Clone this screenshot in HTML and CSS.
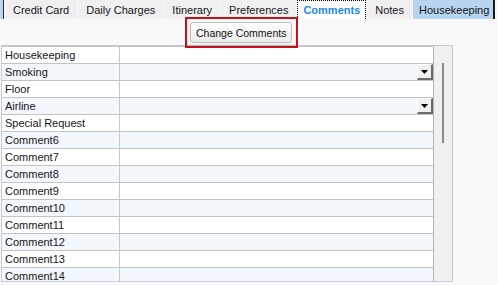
FILE: index.html
```html
<!DOCTYPE html>
<html lang="en">
<head>
  <meta charset="UTF-8" />
  <title>Reservation - Comments</title>
  <link rel="stylesheet" href="styles.css">
</head>
<body>
  <div class="tabs">
    <div class="tab stub"></div>
    <div class="tab">Credit Card</div>
    <div class="tab">Daily Charges</div>
    <div class="tab">Itinerary</div>
    <div class="tab">Preferences</div>
    <div class="tab active">Comments</div>
    <div class="tab">Notes</div>
    <div class="tab hk">Housekeeping</div>
  </div>

  <div class="toolbar">
    <button class="btn">Change Comments</button>
  </div>
  <div class="callout"></div>

  <div class="grid">
    <div class="rows">
      <div class="row"><div class="label">Housekeeping</div><div class="value"></div></div>
      <div class="row"><div class="label">Smoking</div><div class="value"><span class="drop"><svg width="7" height="4" viewBox="0 0 7 4"><polygon points="0,0 7,0 3.5,4" fill="#000"/></svg></span></div></div>
      <div class="row"><div class="label">Floor</div><div class="value"></div></div>
      <div class="row"><div class="label">Airline</div><div class="value"><span class="drop"><svg width="7" height="4" viewBox="0 0 7 4"><polygon points="0,0 7,0 3.5,4" fill="#000"/></svg></span></div></div>
      <div class="row"><div class="label">Special Request</div><div class="value"></div></div>
      <div class="row"><div class="label">Comment6</div><div class="value"></div></div>
      <div class="row"><div class="label">Comment7</div><div class="value"></div></div>
      <div class="row"><div class="label">Comment8</div><div class="value"></div></div>
      <div class="row"><div class="label">Comment9</div><div class="value"></div></div>
      <div class="row"><div class="label">Comment10</div><div class="value"></div></div>
      <div class="row"><div class="label">Comment11</div><div class="value"></div></div>
      <div class="row"><div class="label">Comment12</div><div class="value"></div></div>
      <div class="row"><div class="label">Comment13</div><div class="value"></div></div>
      <div class="row"><div class="label">Comment14</div><div class="value"></div></div>
    </div>
    <div class="scroll"><div class="thumb"></div></div>
  </div>
</body>
</html>
```

FILE: styles.css
```css
body {
  margin: 0;
  background: #f9f9f9;
  font-family: 'Liberation Sans', Arial, sans-serif;
  font-size: 11px;
  color: #151520;
  position: relative;
  height: 285px;
  overflow: hidden;
}
.tabs {
  display: flex;
  gap: 1px;
  height: 19px;
}
.tab {
  background: #f0f0f0;
  padding: 2px 8px 0;
  line-height: 17px;
  white-space: nowrap;
}
.tab.stub {
  width: 3px;
  padding: 0;
  background: #b7d5f0;
  border-right: 1px solid #2a2a2a;
}
.tab.active {
  background: #fff;
  color: #1e88e5;
  font-weight: bold;
  padding: 1px 5px 0;
  border: 1px dotted #000;
  border-bottom: none;
}
.tab.hk {
  background: #b7d5f0;
  padding: 2px 4px 0 6px;
  border-right: 2px solid #1a1a1a;
}
.toolbar {
  height: 26px;
  padding: 3px 0 0 190px;
  box-sizing: border-box;
}
.btn {
  height: 21px;
  padding: 0 5px;
  font-family: 'Liberation Sans', Arial, sans-serif;
  font-size: 10.5px;
  color: #111;
  background: linear-gradient(#fdfdfd, #ededed);
  border: 1px solid #bcbcbc;
  border-radius: 3px;
}
.callout {
  position: absolute;
  left: 185px;
  top: 17px;
  width: 113px;
  height: 31px;
  box-sizing: border-box;
  border: 2px solid #c0121d;
  box-shadow: inset 1px -1px 3px rgba(0, 0, 0, 0.12);
}
.grid {
  display: flex;
  width: 450px;
  height: 235px;
  margin-left: 1px;
  border: 1px solid #c5cad3;
  overflow: hidden;
}
.rows {
  width: 431px;
  border-right: 1px solid #b4b4b4;
}
.row {
  display: flex;
  height: 16px;
  border-bottom: 1px solid #c4c4c4;
  background: #fff;
}
.row:first-child {
  border-top: 1px solid #c4c4c4;
}
.row:nth-child(even) {
  background: #f3f8fc;
}
.label {
  width: 114px;
  padding-left: 3px;
  line-height: 16px;
  border-right: 1px solid #c8c8c8;
}
.value {
  flex: 1;
  display: flex;
  justify-content: flex-end;
}
.drop {
  width: 16px;
  height: 16px;
  box-sizing: border-box;
  display: flex;
  align-items: center;
  justify-content: center;
  background: #f0f0f0;
  border-top: 1px solid #fff;
  border-left: 1px solid #fff;
  border-right: 2px solid #6a6a6a;
  border-bottom: 2px solid #6a6a6a;
}
.scroll {
  width: 18px;
  background: #f0f0f0;
  padding-top: 17px;
}
.thumb {
  width: 2px;
  height: 80px;
  margin-left: 8px;
  background: #8a8a8a;
}
```
